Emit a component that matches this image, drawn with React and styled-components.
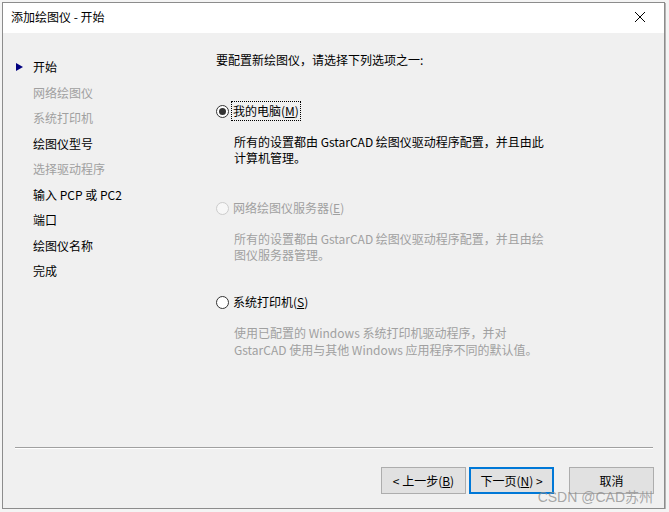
import React from 'react';
import styled, { createGlobalStyle } from 'styled-components';

const GlobalStyle = createGlobalStyle`
  html, body {
    margin: 0;
    padding: 0;
    background: #f4f4f4;
  }
  body {
    font-family: "Noto Sans CJK SC", "Noto Sans", sans-serif;
    font-size: 12px;
    color: #000;
  }
`;

const navItems = [
  { label: '开始', active: true },
  { label: '网络绘图仪', disabled: true },
  { label: '系统打印机', disabled: true },
  { label: '绘图仪型号' },
  { label: '选择驱动程序', disabled: true },
  { label: '输入 PCP 或 PC2' },
  { label: '端口' },
  { label: '绘图仪名称' },
  { label: '完成' },
];

const App = () => {
  return (
    <>
      <GlobalStyle />
      <Dialog>
        <TitleBar>
          <Title>添加绘图仪 - 开始</Title>
          <CloseButton>
            <svg width="12" height="12" viewBox="0 0 12 12">
              <path d="M1 1 L11 11 M11 1 L1 11" stroke="#000" strokeWidth="1" fill="none" />
            </svg>
          </CloseButton>
        </TitleBar>
        <Body>
          <Content>
            <Nav>
              {navItems.map((item) => (
                <NavItem key={item.label} $disabled={item.disabled}>
                  <Arrow>{item.active ? <ArrowShape /> : null}</Arrow>
                  {item.label}
                </NavItem>
              ))}
            </Nav>
            <Main>
              <Heading>要配置新绘图仪，请选择下列选项之一:</Heading>

              <OptionRow $top={33}>
                <Radio $checked />
                <FocusLabel>我的电脑(<u>M</u>)</FocusLabel>
              </OptionRow>
              <Desc $top={13}>
                所有的设置都由 GstarCAD 绘图仪驱动程序配置，并且由此<br />
                计算机管理。
              </Desc>

              <OptionRow $top={32} $disabled>
                <Radio $disabled />
                <Label>网络绘图仪服务器(<u>E</u>)</Label>
              </OptionRow>
              <Desc $top={13} $disabled>
                所有的设置都由 GstarCAD 绘图仪驱动程序配置，并且由绘<br />
                图仪服务器管理。
              </Desc>

              <OptionRow $top={29}>
                <Radio />
                <Label>系统打印机(<u>S</u>)</Label>
              </OptionRow>
              <Desc $top={12} $disabled $lh={17}>
                使用已配置的 Windows 系统打印机驱动程序，并对<br />
                GstarCAD 使用与其他 Windows 应用程序不同的默认值。
              </Desc>
            </Main>
          </Content>
          <Footer>
            <Separator />
            <ButtonRow>
              <Button>&lt; 上一步(<u>B</u>)</Button>
              <Button $primary>下一页(<u>N</u>) &gt;</Button>
              <Button $gap={15}>取消</Button>
            </ButtonRow>
          </Footer>
        </Body>
        <Watermark>CSDN @CAD苏州</Watermark>
      </Dialog>
    </>
  );
};

export default App;

const Dialog = styled.div`
  position: relative;
  box-sizing: border-box;
  margin: 2px 0 0 2px;
  width: 663px;
  height: 507px;
  border: 1px solid #8c8c8c;
  display: flex;
  flex-direction: column;
  background: #f0f0f0;
  box-shadow: 1px 1px 0 #b5b5b5;
`;

const TitleBar = styled.div`
  height: 30px;
  background: #ffffff;
  display: flex;
  align-items: center;
  justify-content: space-between;
  padding-left: 8px;
`;

const Title = styled.span`
  font-size: 12px;
  line-height: 16px;
  margin-top: -2px;
`;

const CloseButton = styled.div`
  width: 46px;
  height: 30px;
  display: flex;
  align-items: center;
  justify-content: center;
  margin-top: -2px;
  margin-right: 1px;
`;

const Body = styled.div`
  flex: 1;
  display: flex;
  flex-direction: column;
`;

const Content = styled.div`
  flex: 1;
  display: flex;
`;

const Nav = styled.div`
  box-sizing: border-box;
  width: 213px;
  padding-top: 21px;
  padding-left: 13px;
  display: flex;
  flex-direction: column;
`;

const NavItem = styled.div`
  height: 25.5px;
  display: flex;
  align-items: center;
  color: ${(p) => (p.$disabled ? '#a0a0a0' : '#000')};
  white-space: nowrap;
`;

const Arrow = styled.span`
  width: 17px;
  display: flex;
  align-items: center;
`;

const ArrowShape = styled.span`
  width: 0;
  height: 0;
  border-top: 4.5px solid transparent;
  border-bottom: 4.5px solid transparent;
  border-left: 7px solid #000080;
`;

const Main = styled.div`
  flex: 1;
  padding-top: 19px;
  display: flex;
  flex-direction: column;
`;

const Heading = styled.div`
  line-height: 16px;
`;

const OptionRow = styled.div`
  margin-top: ${(p) => p.$top}px;
  height: 20px;
  display: flex;
  align-items: center;
  color: ${(p) => (p.$disabled ? '#a0a0a0' : '#000')};
`;

const Radio = styled.span`
  box-sizing: border-box;
  width: 13px;
  height: 13px;
  border-radius: 50%;
  border: 1px solid ${(p) => (p.$disabled ? '#cccccc' : '#333333')};
  background: ${(p) => (p.$disabled ? '#f7f7f7' : '#ffffff')};
  display: flex;
  align-items: center;
  justify-content: center;
  margin-right: 2px;

  &::after {
    content: '';
    display: ${(p) => (p.$checked ? 'block' : 'none')};
    width: 7px;
    height: 7px;
    border-radius: 50%;
    background: #333333;
  }
`;

const Label = styled.span`
  padding: 1px 1px;
  line-height: 16px;
  border: 1px solid transparent;
`;

const FocusLabel = styled(Label)`
  border: 1px dotted #000;
`;

const Desc = styled.div`
  margin-top: ${(p) => p.$top}px;
  padding-left: 18px;
  line-height: ${(p) => p.$lh || 16}px;
  color: ${(p) => (p.$disabled ? '#a0a0a0' : '#000')};
`;

const Footer = styled.div`
  display: flex;
  flex-direction: column;
`;

const Separator = styled.div`
  margin: 0 11px 0 12px;
  height: 1px;
  background: #a0a0a0;
  border-bottom: 1px solid #ffffff;
`;

const ButtonRow = styled.div`
  display: flex;
  justify-content: flex-end;
  margin-top: 18px;
  margin-bottom: 14px;
  padding-right: 10px;
`;

const Button = styled.div`
  box-sizing: border-box;
  width: 85px;
  height: 27px;
  margin-left: ${(p) => p.$gap || 3}px;
  display: flex;
  align-items: center;
  justify-content: center;
  background: #e1e1e1;
  border: ${(p) => (p.$primary ? '2px solid #0078d7' : '1px solid #adadad')};
  white-space: nowrap;
`;

const Watermark = styled.div`
  position: absolute;
  right: 11px;
  bottom: 2px;
  font-family: "Liberation Sans", "Noto Sans CJK SC", sans-serif;
  font-size: 14px;
  color: rgba(140, 140, 140, 0.75);
  pointer-events: none;
`;
